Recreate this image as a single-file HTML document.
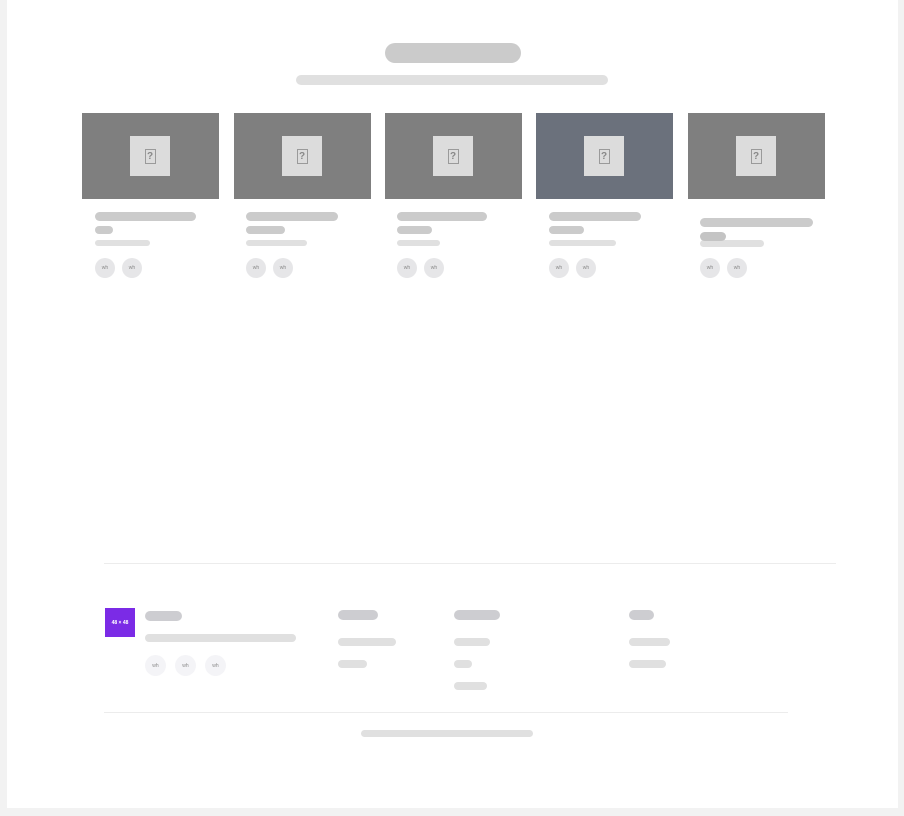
<!DOCTYPE html>
<html><head><style>
body{margin:0;width:904px;height:816px;background:#f2f2f2;position:relative;overflow:hidden;font-family:"Liberation Sans",sans-serif}
.w{position:absolute;left:7px;top:0;width:891px;height:808px;background:#fff}
.b{position:absolute;border-radius:10px}
.d{background:#cbcbcb}.l{background:#e0e0e0}.g{background:#cdcdd1}
.img{position:absolute;top:113px;width:137px;height:86px;background:#7f7f7f}
.sq{position:absolute;left:48px;top:23px;width:40px;height:40px;background:#dcdcdc;display:flex;align-items:center;justify-content:center}
.q{width:9px;height:13px;border:1px solid #9a9a9a;font-size:10px;line-height:13px;text-align:center;color:#888;font-weight:bold}
.c{position:absolute;width:20px;height:20px;border-radius:50%;background:#e6e6e8;font-size:5px;color:#888;display:flex;align-items:center;justify-content:center}
.c2{background:#f4f4f7;width:21px;height:21px}
.hr{position:absolute;height:1px;background:#ececec}
</style></head><body>
<div class="w"></div>
<div class="b d" style="left:385px;top:43px;width:136px;height:20px"></div>
<div class="b l" style="left:296px;top:75px;width:312px;height:10px"></div>

<div class="img" style="left:82px"><div class="sq"><div class="q">?</div></div></div>
<div class="img" style="left:234px"><div class="sq"><div class="q">?</div></div></div>
<div class="img" style="left:385px"><div class="sq"><div class="q">?</div></div></div>
<div class="img" style="left:536px;background:#6b717c"><div class="sq"><div class="q">?</div></div></div>
<div class="img" style="left:688px"><div class="sq"><div class="q">?</div></div></div>

<div class="b d" style="left:95px;top:212px;width:101px;height:9px"></div>
<div class="b d" style="left:95px;top:226px;width:18px;height:8px"></div>
<div class="b l" style="left:95px;top:240px;width:55px;height:6px"></div>
<div class="c" style="left:95px;top:258px">wh</div><div class="c" style="left:122px;top:258px">wh</div>

<div class="b d" style="left:246px;top:212px;width:92px;height:9px"></div>
<div class="b d" style="left:246px;top:226px;width:39px;height:8px"></div>
<div class="b l" style="left:246px;top:240px;width:61px;height:6px"></div>
<div class="c" style="left:246px;top:258px">wh</div><div class="c" style="left:273px;top:258px">wh</div>

<div class="b d" style="left:397px;top:212px;width:90px;height:9px"></div>
<div class="b d" style="left:397px;top:226px;width:35px;height:8px"></div>
<div class="b l" style="left:397px;top:240px;width:43px;height:6px"></div>
<div class="c" style="left:397px;top:258px">wh</div><div class="c" style="left:424px;top:258px">wh</div>

<div class="b d" style="left:549px;top:212px;width:92px;height:9px"></div>
<div class="b d" style="left:549px;top:226px;width:35px;height:8px"></div>
<div class="b l" style="left:549px;top:240px;width:67px;height:6px"></div>
<div class="c" style="left:549px;top:258px">wh</div><div class="c" style="left:576px;top:258px">wh</div>

<div class="b d" style="left:700px;top:218px;width:113px;height:9px"></div>
<div class="b l" style="left:700px;top:240px;width:64px;height:7px"></div>
<div class="b" style="left:700px;top:232px;width:26px;height:9px;background:#c4c4c4"></div>
<div class="c" style="left:700px;top:258px">wh</div><div class="c" style="left:727px;top:258px">wh</div>

<div class="hr" style="left:104px;top:563px;width:732px"></div>
<div style="position:absolute;left:105px;top:608px;width:30px;height:29px;background:#7b2be6;color:#fff;font-size:5px;font-weight:bold;display:flex;align-items:center;justify-content:center">48 × 48</div>
<div class="b g" style="left:145px;top:611px;width:37px;height:10px"></div>
<div class="b l" style="left:145px;top:634px;width:151px;height:8px"></div>
<div class="c c2" style="left:145px;top:655px">wh</div><div class="c c2" style="left:175px;top:655px">wh</div><div class="c c2" style="left:205px;top:655px">wh</div>

<div class="b g" style="left:338px;top:610px;width:40px;height:10px"></div>
<div class="b l" style="left:338px;top:638px;width:58px;height:8px"></div>
<div class="b l" style="left:338px;top:660px;width:29px;height:8px"></div>

<div class="b g" style="left:454px;top:610px;width:46px;height:10px"></div>
<div class="b l" style="left:454px;top:638px;width:36px;height:8px"></div>
<div class="b l" style="left:454px;top:660px;width:18px;height:8px"></div>
<div class="b l" style="left:454px;top:682px;width:33px;height:8px"></div>

<div class="b g" style="left:629px;top:610px;width:25px;height:10px"></div>
<div class="b l" style="left:629px;top:638px;width:41px;height:8px"></div>
<div class="b l" style="left:629px;top:660px;width:37px;height:8px"></div>

<div class="hr" style="left:104px;top:712px;width:684px"></div>
<div class="b l" style="left:361px;top:730px;width:172px;height:7px"></div>
</body></html>
